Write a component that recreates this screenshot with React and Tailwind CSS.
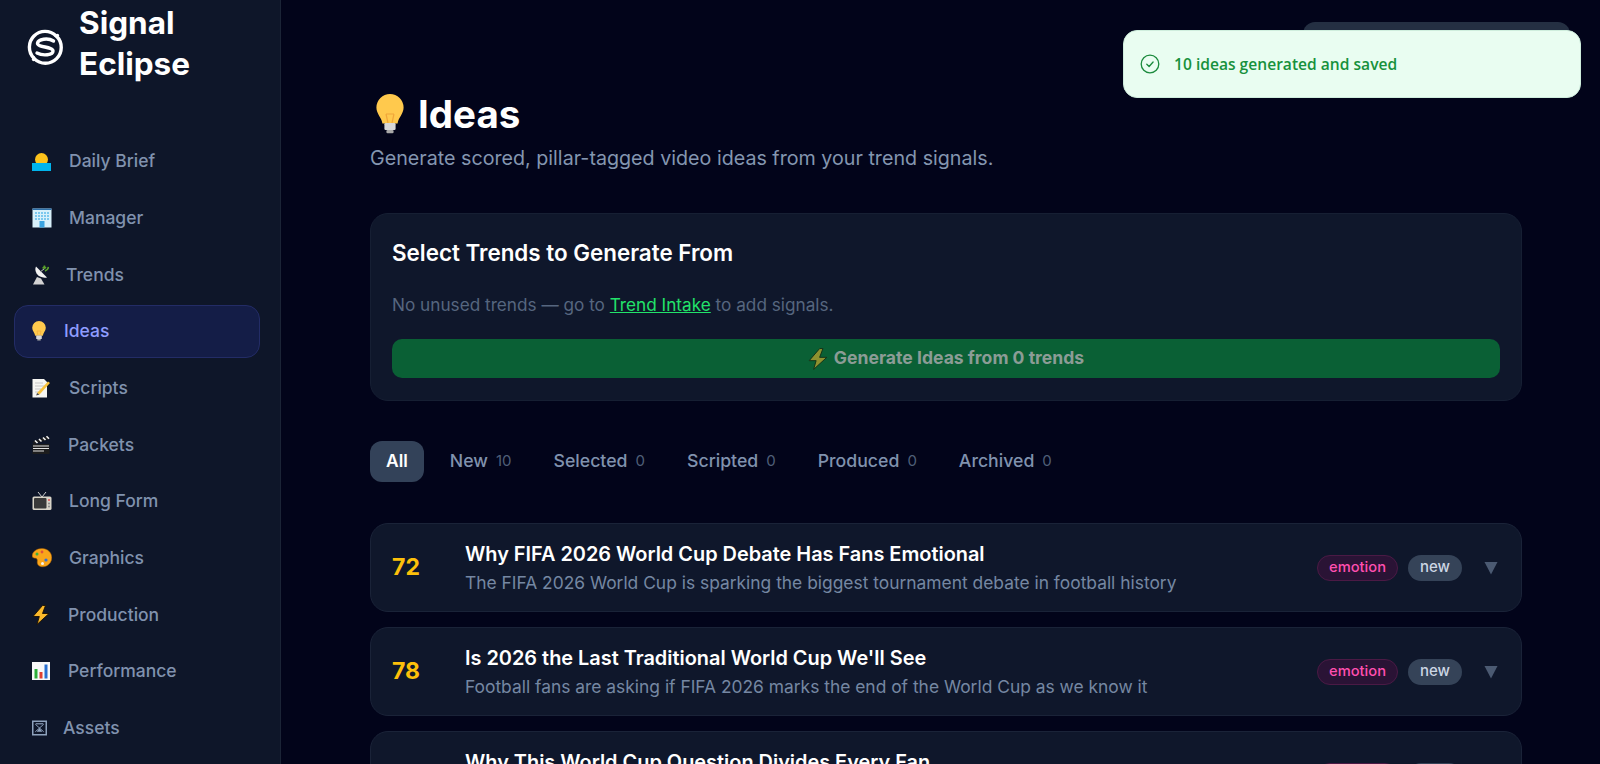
import React from "react";

const Sun = () => (
  <svg width="19" height="18" viewBox="0 0 19 18" className="shrink-0">
    <circle cx="9.500" cy="6.500" r="6.500" fill="#fcc21b" />
    <rect x="0" y="10" width="19" height="8" fill="#00b4ec" />
  </svg>
);
const Building = () => (
  <svg width="20" height="20" viewBox="0 0 20 20" className="shrink-0">
    <rect x="0.500" y="0.500" width="19" height="19" fill="#d8f0fa" />
    <rect x="0.500" y="0.500" width="19" height="1.500" fill="#2c6fa8" />
    {[3, 6, 9, 12, 15].map((x) => [4, 7, 10].map((y) => <rect key={x + "-" + y} x={x} y={y} width="2" height="2" fill="#7cc8ee" />))}
    <rect x="7.500" y="13" width="5" height="6.500" fill="#3aa3e0" />
  </svg>
);
const Dish = () => (
  <svg width="17" height="20" viewBox="0 0 17 20" className="shrink-0">
    <path d="M4 1.500C1.500 6 6 14 15 12.500z" fill="#f2f2f2" />
    <path d="M8 7l4-3" stroke="#bdbdbd" strokeWidth="1" />
    <path d="M10.500 3q2-.3 2-2.500M13 6q3-1 3.500-4M12 4l2-2" stroke="#5aa02c" strokeWidth="1.600" fill="none" />
    <path d="M1 19.500l4-7.500 4 1.500 3.500 6z" fill="#d2d2d2" />
  </svg>
);
const Bulb = ({ w = 14, h = 20 }) => (
  <svg width={w} height={h} viewBox="0 0 14 20" className="shrink-0">
    <path d="M7 0a6.800 6.800 0 0 0-6.800 6.800c0 3.200 2.600 5 3 8h7.600c.4-3 3-4.800 3-8A6.800 6.800 0 0 0 7 0z" fill="#ffc94d" />
    <path d="M5 10l1 4.500M9 10l-1 4.500M5 10h4" stroke="#f0a63a" strokeWidth="0.600" fill="none" />
    <rect x="4.200" y="14.500" width="5.600" height="3.500" rx="0.600" fill="#d8d8d8" />
    <rect x="5.200" y="18" width="3.600" height="1.600" rx="0.600" fill="#a8a8a8" />
  </svg>
);
const Memo = () => (
  <svg width="19" height="20" viewBox="0 0 19 20" className="shrink-0">
    <path d="M0.500 1h11.500l3 3v15.500h-14.500z" fill="#f6f6f2" />
    <path d="M3 5h8M3 8h9M3 11h6M3 14h5" stroke="#bbb" strokeWidth="0.800" />
    <path d="M5 15L16 3.500l2 1.500L7.500 16.500z" fill="#f9c23c" />
    <path d="M5 15l-.800 2.500 3.300-1z" fill="#444" />
  </svg>
);
const Clapper = () => (
  <svg width="18" height="20" viewBox="0 0 18 20" className="shrink-0">
    <rect x="0.500" y="9" width="17" height="10" fill="#1d1d1d" />
    <path d="M1 11h16M1 13.500h16M1 16h11" stroke="#e2e2e2" strokeWidth="1" />
    <path d="M0.500 7L16 1l1.500 3L2 9z" fill="#1d1d1d" />
    <path d="M3 5.500l2.500 2.500M7 4l2.500 2.500M11 2.500l2.500 2.500M14.500 1.200l2.500 2.500" stroke="#f0f0f0" strokeWidth="1.600" />
  </svg>
);
const Tv = () => (
  <svg width="20" height="20" viewBox="0 0 20 20" className="shrink-0">
    <path d="M6 1l4 5 4-5" stroke="#d0d0d0" strokeWidth="1" fill="none" />
    <rect x="0.500" y="5.500" width="19" height="13.500" rx="1.500" fill="#d8d4c8" />
    <rect x="2" y="7" width="12.500" height="10.500" rx="1" fill="#3a3a3a" />
    <circle cx="17" cy="9" r="1" fill="#e05050" />
    <circle cx="17" cy="12.500" r="1" fill="#888" />
    <circle cx="17" cy="15.500" r="1" fill="#888" />
  </svg>
);
const Palette = () => (
  <svg width="20" height="20" viewBox="0 0 20 20" className="shrink-0">
    <path d="M10 .5C4.500.5.200 3.800.200 8c0 2.800 3.800 1.600 4.800 3 1 1.500-.500 3.500.800 5.500 1.500 2.500 6 3 9.200 1.200 2.800-1.600 4.800-4.500 4.800-8C19.800 4.500 15.500.5 10 .5z" fill="#f9a51a" stroke="#a85d00" strokeWidth="0.500" />
    <circle cx="5" cy="6" r="1.500" fill="#3fae3f" />
    <circle cx="10" cy="4" r="1.400" fill="#e2513a" />
    <circle cx="14" cy="12" r="1.600" fill="#2f6fd6" />
    <circle cx="10.500" cy="15.500" r="1.500" fill="#f4f4f4" />
  </svg>
);
const Zap = ({ op = 1, w = 18, h = 20 }) => (
  <svg width={w} height={h} viewBox="0 0 18 20" className="shrink-0" style={{ opacity: op }}>
    <path d="M10.500 0.500L1 11.500h6.300L5 19.500l12-11h-6.500l3-8z" fill="#fbb92b" stroke="#1a1000" strokeWidth="0.900" strokeLinejoin="round" />
  </svg>
);
const Chart = () => (
  <svg width="18" height="18" viewBox="0 0 18 18" className="shrink-0">
    <rect x="0" y="0" width="18" height="18" fill="#f8f8f8" />
    <rect x="2.500" y="7" width="3" height="9.500" fill="#2eae3a" />
    <rect x="7.500" y="10" width="3" height="6.500" fill="#e04030" />
    <rect x="12.500" y="2.500" width="3" height="14" fill="#2a70d0" />
  </svg>
);
const Frame = () => (
  <svg width="15" height="16" viewBox="0 0 16 16" className="shrink-0" fill="none" stroke="#8ea2bd">
    <rect x="0.800" y="0.800" width="14.400" height="14.400" strokeWidth="1.600" />
    <path d="M3.500 4l9 8M12.500 4l-9 8" strokeWidth="1" />
    <path d="M5 12l3-4 3 4z" fill="#8ea2bd" stroke="none" />
    <path d="M4 3.500h8" strokeWidth="1.200" />
  </svg>
);

const nav = [
  ["Daily Brief", <Sun />, 18],
  ["Manager", <Building />, 17],
  ["Trends", <Dish />, 17],
  ["Ideas", <Bulb />, 18],
  ["Scripts", <Memo />, 18],
  ["Packets", <Clapper />, 18],
  ["Long Form", <Tv />, 17],
  ["Graphics", <Palette />, 17],
  ["Production", <Zap />, 18],
  ["Performance", <Chart />, 18],
  ["Assets", <Frame />, 16],
];

const tabs = [["New", 10], ["Selected", 0], ["Scripted", 0], ["Produced", 0], ["Archived", 0]];

const ideas = [
  [72, "Why FIFA 2026 World Cup Debate Has Fans Emotional", "The FIFA 2026 World Cup is sparking the biggest tournament debate in football history"],
  [78, "Is 2026 the Last Traditional World Cup We'll See", "Football fans are asking if FIFA 2026 marks the end of the World Cup as we know it"],
  [75, "Why This World Cup Question Divides Every Fan", "One question about the tournament has split football supporters down the middle"],
];

export default function App() {
  return (
    <div className="relative flex h-[764px] w-[1600px] overflow-hidden bg-[#02041a] font-['Inter',sans-serif]">
      <aside className="flex w-[281px] shrink-0 flex-col border-r border-[#1b2436] bg-[#0e1629]">
        <div className="flex h-[135px] items-start gap-[16px] pl-[27px]">
          <svg width="36" height="36" viewBox="0 0 36 36" className="mt-[29px] shrink-0" fill="none" stroke="#fff" strokeWidth="3.400" strokeLinecap="round">
            <path d="M29 6.800A15.700 15.700 0 0 0 6.800 29" />
            <path d="M6.500 30.500l.7-.9A15.700 15.700 0 0 0 29.600 7.200l.9-.7" />
            <path d="M26.500 12C21 8.500 11 10 10.500 14.300c-.4 4.200 15.500 3.200 15.500 7.700 0 4.200-10 5.200-16 2" />
          </svg>
          <div className="mt-[2px] w-[150px] text-[31.500px] font-bold leading-[41px] text-white">Signal Eclipse</div>
        </div>
        <nav className="flex flex-col gap-[3.65px] pl-[14px] pr-[20px]">
          {nav.map(([label, icon, gap]) => {
            const active = label === "Ideas";
            return (
              <div
                key={label}
                style={{ gap }}
                className={
                  "flex h-[53px] items-center rounded-[14px] border pl-[17px] text-[17.500px] font-medium " +
                  (active ? "border-[#232c66] bg-[#141d47] text-[#8f9dff]" : "border-transparent text-[#8092ae]")
                }
              >
                {icon}
                <span>{label}</span>
              </div>
            );
          })}
        </nav>
      </aside>

      <main className="flex min-w-0 flex-1 flex-col pl-[89px] pr-[78px] pt-[91px]">
        <div className="flex h-[46px] items-center gap-[14px] pl-[6px] text-[38.500px] font-bold leading-[46px] text-white">
          <Bulb w={28} h={40} />
          <span>Ideas</span>
        </div>
        <p className="mt-[8px] text-[19.700px] leading-[26px] text-[#8496b0]">Generate scored, pillar-tagged video ideas from your trend signals.</p>

        <section className="mt-[42px] rounded-[18px] border border-[#161f33] bg-[#0f172b] px-[21px] pb-[22px] pt-[25px]">
          <h2 className="text-[22.400px] font-semibold leading-[28px] text-white">Select Trends to Generate From</h2>
          <p className="mt-[26px] text-[17.200px] leading-[24px] text-[#56667f]">
            No unused trends — go to <span className="text-[#22e36a] underline">Trend Intake</span> to add signals.
          </p>
          <div className="mt-[22px] flex h-[39px] items-center justify-center gap-[6px] rounded-[10px] bg-[#0a6035] text-[17.600px] font-bold text-[#8c9c96]">
            <Zap op={0.55} w={20} h={22} />
            <span>Generate Ideas from 0 trends</span>
          </div>
        </section>

        <div className="mt-[40px] flex items-center gap-[10px]">
          <div className="flex h-[41px] items-center rounded-[12px] bg-[#334259] px-[16px] text-[17.400px] font-semibold text-white">All</div>
          {tabs.map(([t, n]) => (
            <div key={t} className="flex h-[41px] items-center gap-[8px] px-[16px] text-[17.700px] font-medium text-[#8092ae]">
              <span>{t}</span>
              <span className="text-[15px] font-normal text-[#4f5f78]">{n}</span>
            </div>
          ))}
        </div>

        <div className="mt-[41px] flex flex-col gap-[15px]">
          {ideas.map(([score, title, desc]) => (
            <div key={score} className="flex h-[89px] shrink-0 items-center rounded-[18px] border border-[#1a2338] bg-[#0f172b] pl-[21px] pr-[23px]">
              <div className="w-[73px] shrink-0 text-[23px] font-bold text-[#fdc00a]">{score}</div>
              <div className="min-w-0 flex-1 pt-[2px]">
                <div className="text-[19.900px] font-semibold leading-[26px] text-white">{title}</div>
                <div className="mt-[3px] text-[17.400px] leading-[26px] text-[#7587a2]">{desc}</div>
              </div>
              <div className="flex shrink-0 items-center gap-[10px]">
                <span className="flex h-[26px] items-center rounded-full border border-[#4b1a45] bg-[#2a1335] px-[11px] text-[14.700px] font-medium text-[#ff4fb0]">emotion</span>
                <span className="flex h-[26px] items-center rounded-full bg-[#354358] px-[12px] text-[15px] font-medium text-[#ccd6e4]">new</span>
                <svg width="14" height="14" viewBox="0 0 14 14" className="ml-[12px]">
                  <path d="M0.500 1h13L7 13.500z" fill="#4b5a72" />
                </svg>
              </div>
            </div>
          ))}
        </div>
      </main>

      <div className="absolute left-[1303px] top-[22px] h-[40px] w-[267px] rounded-[12px] bg-[#242f42]" />
      <div className="absolute left-[1123px] top-[30px] flex h-[68px] w-[458px] items-center gap-[14px] rounded-[14px] border border-[#cfeedd] bg-[#e9fdf1] pl-[16px] text-[15.600px] text-[#17913c]">
        <svg width="20" height="20" viewBox="0 0 20 20" fill="none" stroke="#1b8a3d" strokeWidth="1.300" strokeLinecap="round" strokeLinejoin="round" className="shrink-0">
          <circle cx="10" cy="10" r="8.800" />
          <path d="M6.800 10.300l2.300 2.200 4-4.500" />
        </svg>
        <span className="pt-[2px] font-['Open_Sans',sans-serif] font-semibold">10 ideas generated and saved</span>
      </div>
    </div>
  );
}
